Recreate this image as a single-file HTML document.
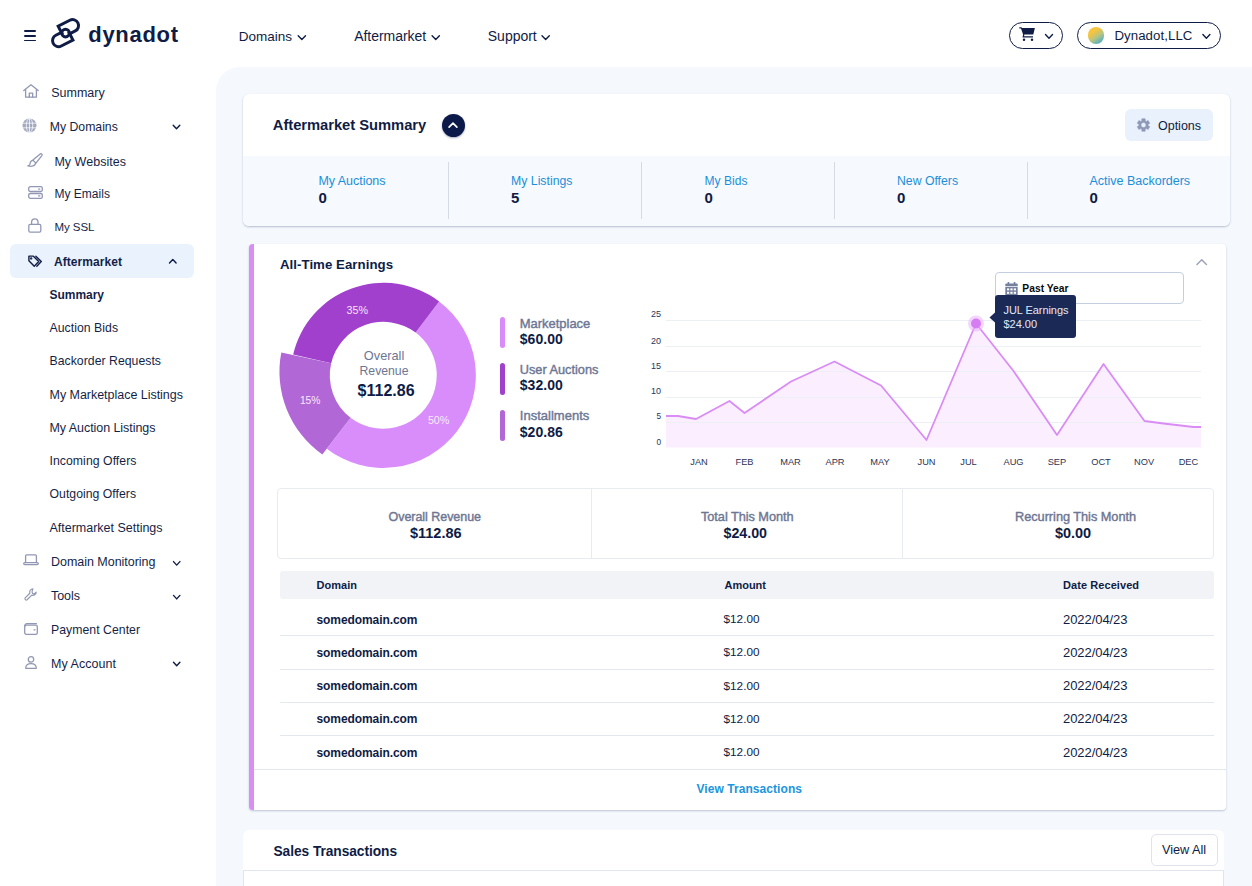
<!DOCTYPE html>
<html lang="en"><head><meta charset="utf-8"><title>Aftermarket Summary - Dynadot</title>
<style>
html,body{margin:0;padding:0;}
body{width:1252px;height:886px;position:relative;overflow:hidden;background:#fff;font-family:"Liberation Sans",Arial,sans-serif;}
.t{position:absolute;white-space:nowrap;line-height:1;}
.b{position:absolute;box-sizing:border-box;}
svg{overflow:visible;}
</style></head><body>
<header>
<div class="b" style="left:24px;top:30.4px;width:12px;height:1.6px;background:#0f1c45;border-radius:1px;"></div>
<div class="b" style="left:24px;top:35.1px;width:12px;height:1.6px;background:#0f1c45;border-radius:1px;"></div>
<div class="b" style="left:24px;top:39.800000000000004px;width:12px;height:1.6px;background:#0f1c45;border-radius:1px;"></div>
<svg class="b" style="left:0;top:0" width="1252" height="886"><g fill="none" stroke="#0f1c45" stroke-width="3" stroke-linejoin="miter"><path d="M62.52 34.73L58.16 26.18L69.84 20.23A6.0 6.0 0 0 1 75.28 30.93L69.05 34.10M68.58 31.48L72.94 40.03L61.26 45.98A6.0 6.0 0 0 1 55.82 35.28L62.05 32.11"/><circle cx="65.55" cy="33.1" r="3.8"/></g></svg>
<span class="t" style="left:88.3px;top:22px;font-size:22.0px;line-height:25px;color:#0f1c45;font-weight:700;letter-spacing:0.69px;">dynadot</span>
<span class="t" style="left:238.7px;top:29px;font-size:13.5px;line-height:15px;color:#0f1c45;letter-spacing:0.02px;">Domains</span>
<svg class="b" style="left:0;top:0" width="1252" height="886"><polyline points="298.2,35.8 301.84999999999997,39.4 305.5,35.8" fill="none" stroke="#0f1c45" stroke-width="1.4" stroke-linecap="round" stroke-linejoin="round"/></svg>
<span class="t" style="left:354.2px;top:28px;font-size:14.0px;line-height:16px;color:#0f1c45;letter-spacing:-0.03px;">Aftermarket</span>
<svg class="b" style="left:0;top:0" width="1252" height="886"><polyline points="432.1,35.8 435.75,39.4 439.40000000000003,35.8" fill="none" stroke="#0f1c45" stroke-width="1.4" stroke-linecap="round" stroke-linejoin="round"/></svg>
<span class="t" style="left:487.8px;top:28px;font-size:14.0px;line-height:16px;color:#0f1c45;letter-spacing:-0.02px;">Support</span>
<svg class="b" style="left:0;top:0" width="1252" height="886"><polyline points="542.0,35.8 545.65,39.4 549.3,35.8" fill="none" stroke="#0f1c45" stroke-width="1.4" stroke-linecap="round" stroke-linejoin="round"/></svg>
<div class="b" style="left:1009px;top:22px;width:54px;height:26.6px;border:1.2px solid #0f1c45;border-radius:14px;"></div>
<svg class="b" style="left:1019px;top:27px" width="17" height="15" viewBox="0 0 17 15"><path d="M0.3 0.2H2.4L3.1 0.9H15.9L14.3 7.6H5.3L5.1 9.2H14V10.6H3.5L4.1 7.4L2 1.6H0.3Z" fill="#0f1c45"/><circle cx="5" cy="12.8" r="1.25" fill="#0f1c45"/><circle cx="13" cy="12.8" r="1.25" fill="#0f1c45"/></svg>
<svg class="b" style="left:0;top:0" width="1252" height="886"><polyline points="1045.5,34.6 1049.0,38.2 1052.5,34.6" fill="none" stroke="#0f1c45" stroke-width="1.4" stroke-linecap="round" stroke-linejoin="round"/></svg>
<div class="b" style="left:1077px;top:22px;width:144px;height:26.6px;border:1.2px solid #0f1c45;border-radius:14px;"></div>
<div class="b" style="left:1087.6px;top:27px;width:16.8px;height:16.8px;border-radius:50%;background:linear-gradient(145deg,#f5c440 32%,#b3c584 58%,#4baec9 88%);"></div>
<span class="t" style="left:1114.4px;top:28px;font-size:13.25px;line-height:15px;color:#0f1c45;letter-spacing:0.07px;">Dynadot,LLC</span>
<svg class="b" style="left:0;top:0" width="1252" height="886"><polyline points="1202.9,34.6 1206.4,38.2 1209.9,34.6" fill="none" stroke="#0f1c45" stroke-width="1.4" stroke-linecap="round" stroke-linejoin="round"/></svg>
</header>
<aside><nav>
<span class="t" style="left:51.2px;top:86px;font-size:12.5px;line-height:14px;color:#141f47;">Summary</span>
<span class="t" style="left:49.8px;top:120px;font-size:12.25px;line-height:14px;color:#141f47;letter-spacing:-0.01px;">My Domains</span>
<svg class="b" style="left:0;top:0" width="1252" height="886"><polyline points="173.2,125.2 176.5,128.7 179.79999999999998,125.2" fill="none" stroke="#0f1c45" stroke-width="1.4" stroke-linecap="round" stroke-linejoin="round"/></svg>
<span class="t" style="left:54.4px;top:155px;font-size:12.5px;line-height:14px;color:#141f47;letter-spacing:0.03px;">My Websites</span>
<span class="t" style="left:54.4px;top:187px;font-size:12.0px;line-height:14px;color:#141f47;letter-spacing:0.03px;">My Emails</span>
<span class="t" style="left:54.4px;top:221px;font-size:11.5px;line-height:12px;color:#141f47;letter-spacing:-0.05px;">My SSL</span>
<div class="b" style="left:10px;top:244px;width:184px;height:34px;background:#e9f2fd;border-radius:6px;"></div>
<span class="t" style="left:54.0px;top:255px;font-size:12.0px;line-height:14px;color:#141f47;font-weight:700;letter-spacing:0.06px;">Aftermarket</span>
<svg class="b" style="left:0;top:0" width="1252" height="886"><polyline points="169.5,263.09999999999997 172.8,259.59999999999997 176.1,263.09999999999997" fill="none" stroke="#0f1c45" stroke-width="1.4" stroke-linecap="round" stroke-linejoin="round"/></svg>
<span class="t" style="left:49.5px;top:288px;font-size:12.0px;line-height:14px;color:#141f47;font-weight:700;letter-spacing:-0.03px;">Summary</span>
<span class="t" style="left:49.5px;top:321px;font-size:12.25px;line-height:14px;color:#141f47;letter-spacing:0.04px;">Auction Bids</span>
<span class="t" style="left:49.5px;top:354px;font-size:12.25px;line-height:14px;color:#141f47;letter-spacing:0.03px;">Backorder Requests</span>
<span class="t" style="left:49.5px;top:388px;font-size:12.5px;line-height:14px;color:#141f47;letter-spacing:-0.03px;">My Marketplace Listings</span>
<span class="t" style="left:49.5px;top:421px;font-size:12.5px;line-height:14px;color:#141f47;letter-spacing:-0.06px;">My Auction Listings</span>
<span class="t" style="left:49.5px;top:454px;font-size:12.25px;line-height:14px;color:#141f47;letter-spacing:0.05px;">Incoming Offers</span>
<span class="t" style="left:49.5px;top:487px;font-size:12.25px;line-height:14px;color:#141f47;letter-spacing:0.02px;">Outgoing Offers</span>
<span class="t" style="left:49.5px;top:521px;font-size:12.5px;line-height:14px;color:#141f47;letter-spacing:-0.01px;">Aftermarket Settings</span>
<span class="t" style="left:51.0px;top:555px;font-size:12.5px;line-height:14px;color:#141f47;letter-spacing:-0.03px;">Domain Monitoring</span>
<svg class="b" style="left:0;top:0" width="1252" height="886"><polyline points="173.5,561.6 176.7,565.1 179.9,561.6" fill="none" stroke="#0f1c45" stroke-width="1.4" stroke-linecap="round" stroke-linejoin="round"/></svg>
<span class="t" style="left:51.0px;top:589px;font-size:12.5px;line-height:14px;color:#141f47;letter-spacing:-0.05px;">Tools</span>
<svg class="b" style="left:0;top:0" width="1252" height="886"><polyline points="173.5,595.4 176.7,598.9 179.9,595.4" fill="none" stroke="#0f1c45" stroke-width="1.4" stroke-linecap="round" stroke-linejoin="round"/></svg>
<span class="t" style="left:51.0px;top:623px;font-size:12.25px;line-height:14px;color:#141f47;letter-spacing:0.04px;">Payment Center</span>
<span class="t" style="left:51.0px;top:657px;font-size:12.5px;line-height:14px;color:#141f47;letter-spacing:0.04px;">My Account</span>
<svg class="b" style="left:0;top:0" width="1252" height="886"><polyline points="173.5,662.1999999999999 176.7,665.6999999999999 179.9,662.1999999999999" fill="none" stroke="#0f1c45" stroke-width="1.4" stroke-linecap="round" stroke-linejoin="round"/></svg>
<svg class="b" style="left:23px;top:84px" width="16" height="14" viewBox="0 0 16 14" fill="none" stroke="#9298b3" stroke-width="1.3" stroke-linecap="round" stroke-linejoin="round"><path d="M0.8 6.6L8 0.8l7.2 5.8"/><path d="M2.6 5.6v7.6h10.8V5.6"/><path d="M6.3 13.2V9.2h3.4v4"/></svg>
<svg class="b" style="left:22px;top:118px" width="15" height="15" viewBox="0 0 15 15"><circle cx="7.5" cy="7.5" r="7" fill="#a3a9c0"/><g stroke="#fff" stroke-width="0.75" fill="none"><ellipse cx="7.5" cy="7.5" rx="3.2" ry="7"/><path d="M0.5 5.2h14M0.5 9.8h14M7.5 0.5v14"/></g></svg>
<svg class="b" style="left:27px;top:153px" width="16" height="14" viewBox="0 0 16 14" fill="none" stroke="#9298b3" stroke-width="1.3" stroke-linecap="round" stroke-linejoin="round"><path d="M5.9 7.1L13.2 0.9c1.1-0.8 2.5 0.6 1.7 1.7L8.9 10.1z"/><path d="M6.2 7.4c-2.6 0-3 2-3.2 3.6-0.1 0.9-1 1.6-2.2 1.9 3.6 0.9 7.8 0.2 7.8-3.1"/></svg>
<svg class="b" style="left:27.5px;top:186px" width="15" height="13" viewBox="0 0 15 13" fill="none" stroke="#9298b3" stroke-width="1.3" stroke-linecap="round" stroke-linejoin="round"><rect x="0.7" y="0.7" width="13.6" height="4.8" rx="1.6"/><rect x="0.7" y="7.5" width="13.6" height="4.8" rx="1.6"/><path d="M10.6 3.1h1.2M10.6 9.9h1.2"/></svg>
<svg class="b" style="left:28px;top:217.5px" width="14" height="15" viewBox="0 0 14 15" fill="none" stroke="#9298b3" stroke-width="1.3" stroke-linecap="round" stroke-linejoin="round"><rect x="0.8" y="6.4" width="12" height="7.8" rx="1.4"/><path d="M3.6 6.4V4a3.2 3.2 0 0 1 6.4 0v2.4"/></svg>
<svg class="b" style="left:27.8px;top:254.8px" width="14.4" height="12.4" viewBox="0 0 15 13" fill="none" stroke="#141f47" stroke-width="1.5" stroke-linecap="round" stroke-linejoin="round"><path d="M0.9 1.2h4.7l5.6 5.7-4.7 4.8L0.9 6z"/><path d="M8.2 1.2l5.7 5.7-4.7 4.8"/><circle cx="3.3" cy="3.6" r="0.5" fill="#141f47"/></svg>
<svg class="b" style="left:23px;top:554px" width="16" height="12" viewBox="0 0 16 12" fill="none" stroke="#9298b3" stroke-width="1.3" stroke-linecap="round" stroke-linejoin="round"><path d="M2.6 8.6V1.8c0-.6.4-1 1-1h8.8c.6 0 1 .4 1 1v6.8"/><rect x="0.7" y="8.6" width="14.6" height="2" rx="1"/></svg>
<svg class="b" style="left:24px;top:587.5px" width="13.4" height="12.6" viewBox="0 0 14 14" fill="none" stroke="#9298b3" stroke-width="1.3" stroke-linecap="round" stroke-linejoin="round"><path d="M9.4 0.9a3.6 3.6 0 0 0-3.3 4.9L0.9 11a1.5 1.5 0 0 0 2.1 2.1l5.2-5.2a3.6 3.6 0 0 0 4.9-3.3l-2.1 2-2-0.6-0.5-2z"/></svg>
<svg class="b" style="left:24px;top:623px" width="14" height="12" viewBox="0 0 14 12" fill="none" stroke="#9298b3" stroke-width="1.3" stroke-linecap="round" stroke-linejoin="round"><rect x="0.7" y="2.2" width="12.6" height="9.1" rx="1.6"/><path d="M0.7 3.6c0-1.6 0.8-2.9 2.4-2.9h9.3"/><path d="M10 6.8h1"/></svg>
<svg class="b" style="left:25px;top:656px" width="12" height="13" viewBox="0 0 12 13" fill="none" stroke="#9298b3" stroke-width="1.3" stroke-linecap="round" stroke-linejoin="round"><circle cx="6" cy="3.4" r="2.7"/><path d="M0.7 12.3c0-3.2 2-4.6 5.3-4.6s5.3 1.4 5.3 4.6z"/></svg>
</nav></aside>
<main>
<div class="b" style="left:216px;top:67px;width:1036px;height:819px;background:#f5f8fd;border-top-left-radius:24px;"></div>
<section>
<div class="b" style="left:243px;top:93.5px;width:987px;height:132.5px;background:#fff;border-radius:6px;box-shadow:0 1px 2px rgba(60,80,120,.35);"></div>
<div class="b" style="left:243px;top:156px;width:987px;height:70px;background:#f6f9fd;border-radius:0 0 6px 6px;"></div>
<span class="t" style="left:272.8px;top:117px;font-size:14.75px;line-height:16px;color:#0f1c45;font-weight:700;letter-spacing:-0.04px;">Aftermarket Summary</span>
<div class="b" style="left:441.5px;top:113.7px;width:23px;height:23px;background:#0c1a4a;border-radius:50%;box-shadow:0 1px 2px rgba(10,20,60,.35);"></div>
<svg class="b" style="left:0;top:0" width="1252" height="886"><polyline points="449.1,127.2 453.0,123.2 456.90000000000003,127.2" fill="none" stroke="#fff" stroke-width="1.7" stroke-linecap="round" stroke-linejoin="round"/></svg>
<div class="b" style="left:1125.4px;top:109.4px;width:87.6px;height:31.6px;background:#e8f1fc;border-radius:6px;"></div>
<span class="t" style="left:1158.0px;top:119px;font-size:12.5px;line-height:14px;color:#0f1c45;letter-spacing:-0.01px;">Options</span>
<svg class="b" style="left:1136.6px;top:118px" width="13" height="14" viewBox="0 0 13 14"><path d="M4.83 0.72 L8.17 0.72 L8.25 2.86 L9.21 3.41 L11.10 2.41 L12.78 5.31 L10.97 6.45 L10.97 7.55 L12.78 8.69 L11.10 11.59 L9.21 10.59 L8.25 11.14 L8.17 13.28 L4.83 13.28 L4.75 11.14 L3.79 10.59 L1.90 11.59 L0.22 8.69 L2.03 7.55 L2.03 6.45 L0.22 5.31 L1.90 2.41 L3.79 3.41 L4.75 2.86Z M6.5 4.5a2.5 2.5 0 1 0 0 5a2.5 2.5 0 1 0 0-5z" fill="#8f98b6" stroke="#8f98b6" stroke-width="0.5" stroke-linejoin="round" fill-rule="evenodd"/></svg>
<div class="b" style="left:448.0px;top:162px;width:1px;height:57px;background:#d5dae3;"></div>
<div class="b" style="left:641.0px;top:162px;width:1px;height:57px;background:#d5dae3;"></div>
<div class="b" style="left:834.0px;top:162px;width:1px;height:57px;background:#d5dae3;"></div>
<div class="b" style="left:1027.0px;top:162px;width:1px;height:57px;background:#d5dae3;"></div>
<span class="t" style="left:318.5px;top:174px;font-size:12.5px;line-height:14px;color:#1b8fd9;letter-spacing:-0.04px;">My Auctions</span>
<span class="t" style="left:318.5px;top:189px;font-size:15.0px;line-height:17px;color:#0f1c45;font-weight:700;letter-spacing:0.06px;">0</span>
<span class="t" style="left:511.0px;top:174px;font-size:12.25px;line-height:14px;color:#1b8fd9;letter-spacing:0.02px;">My Listings</span>
<span class="t" style="left:511.0px;top:189px;font-size:15.0px;line-height:17px;color:#0f1c45;font-weight:700;letter-spacing:0.06px;">5</span>
<span class="t" style="left:704.5px;top:174px;font-size:12.0px;line-height:14px;color:#1b8fd9;letter-spacing:0.05px;">My Bids</span>
<span class="t" style="left:704.5px;top:189px;font-size:15.0px;line-height:17px;color:#0f1c45;font-weight:700;letter-spacing:0.06px;">0</span>
<span class="t" style="left:897.0px;top:174px;font-size:12.25px;line-height:14px;color:#1b8fd9;">New Offers</span>
<span class="t" style="left:897.0px;top:189px;font-size:15.0px;line-height:17px;color:#0f1c45;font-weight:700;letter-spacing:0.06px;">0</span>
<span class="t" style="left:1089.5px;top:174px;font-size:12.5px;line-height:14px;color:#1b8fd9;letter-spacing:-0.01px;">Active Backorders</span>
<span class="t" style="left:1089.5px;top:189px;font-size:15.0px;line-height:17px;color:#0f1c45;font-weight:700;letter-spacing:0.06px;">0</span>
</section>
<section>
<div class="b" style="left:249px;top:244px;width:977px;height:566px;background:#fff;border-radius:4px;box-shadow:0 1px 2px rgba(60,80,120,.3);border-left:5px solid #da8ef3;"></div>
<span class="t" style="left:280.0px;top:257px;font-size:13.25px;line-height:15px;color:#0f1c45;font-weight:700;letter-spacing:0.04px;">All-Time Earnings</span>
<svg class="b" style="left:0;top:0" width="1252" height="886"><polyline points="1197.0,264.5 1201.75,259.7 1206.5,264.5" fill="none" stroke="#9aa0b5" stroke-width="1.4" stroke-linecap="round" stroke-linejoin="round"/></svg>
<svg class="b" style="left:0;top:0" width="1252" height="886"><path d="M439.13 301.45A92.6 92.6 0 1 1 326.77 448.67L350.62 417.81A53.6 53.6 0 1 0 415.66 332.59Z" fill="#d98dfa"/><path d="M293.17 354.57A92.6 92.6 0 0 1 439.13 301.45L415.66 332.59A53.6 53.6 0 0 0 331.17 363.34Z" fill="#a140cc"/><path d="M281.3 352.4A101.4 101.4 0 0 0 322.3 454.5L350.62 417.81A53.6 53.6 0 0 1 331.17 363.34Z" fill="#b267d6"/></svg>
<span class="t" style="left:346.4px;top:304px;font-size:10.75px;line-height:12px;color:#f6e4fc;letter-spacing:0.09px;">35%</span>
<span class="t" style="left:299.9px;top:395px;font-size:10.25px;line-height:11px;color:#f6e9fb;letter-spacing:-0.01px;">15%</span>
<span class="t" style="left:427.9px;top:414px;font-size:10.75px;line-height:12px;color:#f6e9fb;letter-spacing:-0.01px;">50%</span>
<span class="t" style="left:363.8px;top:348px;font-size:12.75px;line-height:15px;color:#6d7693;letter-spacing:0.02px;">Overall</span>
<span class="t" style="left:359.5px;top:364px;font-size:12.25px;line-height:14px;color:#6d7693;letter-spacing:-0.01px;">Revenue</span>
<span class="t" style="left:357.6px;top:382px;font-size:16.0px;line-height:17px;color:#0f1c45;font-weight:700;letter-spacing:0.01px;">$112.86</span>
<div class="b" style="left:500px;top:316.8px;width:5px;height:31.6px;background:#d98cf9;border-radius:2.5px;"></div>
<span class="t" style="left:519.8px;top:316px;font-size:13.0px;line-height:15px;color:#6d7693;-webkit-text-stroke:0.4px #6d7693;letter-spacing:-0.03px;">Marketplace</span>
<span class="t" style="left:519.8px;top:331px;font-size:14.0px;line-height:16px;color:#0f1c45;font-weight:700;letter-spacing:0.04px;">$60.00</span>
<div class="b" style="left:500px;top:363.2px;width:5px;height:31.6px;background:#a041cc;border-radius:2.5px;"></div>
<span class="t" style="left:519.8px;top:362px;font-size:12.75px;line-height:15px;color:#6d7693;-webkit-text-stroke:0.4px #6d7693;letter-spacing:-0.01px;">User Auctions</span>
<span class="t" style="left:519.8px;top:377px;font-size:14.0px;line-height:16px;color:#0f1c45;font-weight:700;letter-spacing:0.04px;">$32.00</span>
<div class="b" style="left:500px;top:409.7px;width:5px;height:31.6px;background:#b267d6;border-radius:2.5px;"></div>
<span class="t" style="left:519.8px;top:408px;font-size:13.0px;line-height:15px;color:#6d7693;-webkit-text-stroke:0.4px #6d7693;letter-spacing:0.01px;">Installments</span>
<span class="t" style="left:519.8px;top:424px;font-size:14.0px;line-height:16px;color:#0f1c45;font-weight:700;letter-spacing:0.04px;">$20.86</span>
<svg class="b" style="left:0;top:0" width="1252" height="886"><polygon points="666,416 678,416 696,419 729.5,401 744.5,413 791,381.5 834.5,361.5 881,385.5 926.5,440 976,323.5 1013.5,371 1057,435 1103.5,364 1144.5,421 1163.5,423.5 1193.5,427 1201,427 1201,447.5 666,447.5" fill="#fbeefe"/><path d="M666 320.5H1201" stroke="#ecf0f5" stroke-width="1"/><path d="M666 346.5H1201" stroke="#ecf0f5" stroke-width="1"/><path d="M666 371.5H1201" stroke="#ecf0f5" stroke-width="1"/><path d="M666 397.5H1201" stroke="#ecf0f5" stroke-width="1"/><path d="M666 422.5H1201" stroke="#ecf0f5" stroke-width="1"/><polyline points="666,416 678,416 696,419 729.5,401 744.5,413 791,381.5 834.5,361.5 881,385.5 926.5,440 976,323.5 1013.5,371 1057,435 1103.5,364 1144.5,421 1163.5,423.5 1193.5,427 1201,427" fill="none" stroke="#da8cf5" stroke-width="1.8" stroke-linejoin="round"/><circle cx="976" cy="323.5" r="8" fill="#e9b3fb" fill-opacity="0.55"/><circle cx="976" cy="323.5" r="5" fill="#d77df3"/></svg>
<span class="t" style="left:651.0px;top:309px;font-size:9.0px;line-height:10px;color:#2a3358;letter-spacing:-0.01px;">25</span>
<span class="t" style="left:651.0px;top:336px;font-size:9.0px;line-height:10px;color:#2a3358;letter-spacing:-0.01px;">20</span>
<span class="t" style="left:651.0px;top:361px;font-size:9.0px;line-height:10px;color:#2a3358;letter-spacing:-0.01px;">15</span>
<span class="t" style="left:651.0px;top:386px;font-size:9.0px;line-height:10px;color:#2a3358;letter-spacing:-0.01px;">10</span>
<span class="t" style="left:656.4px;top:412px;font-size:8.25px;line-height:9px;color:#2a3358;letter-spacing:0.01px;">5</span>
<span class="t" style="left:656.4px;top:438px;font-size:8.25px;line-height:9px;color:#2a3358;letter-spacing:0.01px;">0</span>
<span class="t" style="left:690.3px;top:457px;font-size:9.25px;line-height:10px;color:#2a3358;">JAN</span>
<span class="t" style="left:735.5px;top:457px;font-size:9.25px;line-height:10px;color:#2a3358;">FEB</span>
<span class="t" style="left:780.2px;top:457px;font-size:9.25px;line-height:10px;color:#2a3358;">MAR</span>
<span class="t" style="left:825.5px;top:457px;font-size:9.25px;line-height:10px;color:#2a3358;">APR</span>
<span class="t" style="left:870.3px;top:457px;font-size:9.25px;line-height:10px;color:#2a3358;">MAY</span>
<span class="t" style="left:917.5px;top:457px;font-size:9.25px;line-height:10px;color:#2a3358;">JUN</span>
<span class="t" style="left:960.3px;top:457px;font-size:9.25px;line-height:10px;color:#2a3358;">JUL</span>
<span class="t" style="left:1003.5px;top:457px;font-size:9.25px;line-height:10px;color:#2a3358;">AUG</span>
<span class="t" style="left:1047.7px;top:457px;font-size:9.25px;line-height:10px;color:#2a3358;">SEP</span>
<span class="t" style="left:1091.2px;top:457px;font-size:9.25px;line-height:10px;color:#2a3358;">OCT</span>
<span class="t" style="left:1134.0px;top:457px;font-size:9.25px;line-height:10px;color:#2a3358;">NOV</span>
<span class="t" style="left:1178.7px;top:457px;font-size:9.25px;line-height:10px;color:#2a3358;">DEC</span>
<div class="b" style="left:995px;top:272px;width:189px;height:32px;background:#fff;border:1px solid #c3cfdf;border-radius:4px;"></div>
<svg class="b" style="left:1005px;top:281.5px" width="13" height="14" viewBox="0 0 13 14"><path d="M0.3 2.6c0-.7.5-1.2 1.2-1.2h10c.7 0 1.2.5 1.2 1.2v1.6H.3z" fill="#75809f"/><rect x="2.6" y="0" width="1.7" height="3" rx=".5" fill="#75809f"/><rect x="8.7" y="0" width="1.7" height="3" rx=".5" fill="#75809f"/><path d="M.3 5h12.4v7.6c0 .7-.5 1.2-1.2 1.2h-10c-.7 0-1.2-.5-1.2-1.2z" fill="#75809f"/><g fill="#fff"><rect x="2" y="6.4" width="2.2" height="2"/><rect x="5.4" y="6.4" width="2.2" height="2"/><rect x="8.8" y="6.4" width="2.2" height="2"/><rect x="2" y="9.8" width="2.2" height="2"/><rect x="5.4" y="9.8" width="2.2" height="2"/><rect x="8.8" y="9.8" width="2.2" height="2"/></g></svg>
<span class="t" style="left:1022.3px;top:283px;font-size:10.25px;line-height:11px;color:#0a0a0a;font-weight:700;letter-spacing:0.04px;">Past Year</span>
<div class="b" style="left:994.5px;top:295px;width:81.5px;height:42.5px;background:#1a2956;border-radius:3px;"></div>
<svg class="b" style="left:0;top:0" width="1252" height="886"><path d="M995 312.5L989.5 317.5L995 322.5Z" fill="#1a2956"/></svg>
<span class="t" style="left:1003.5px;top:304px;font-size:11.0px;line-height:12px;color:#e3e8f6;letter-spacing:-0.06px;">JUL Earnings</span>
<span class="t" style="left:1003.5px;top:318px;font-size:11.0px;line-height:12px;color:#e3e8f6;letter-spacing:-0.03px;">$24.00</span>
<div class="b" style="left:277px;top:488px;width:937px;height:70.5px;background:#fff;border:1px solid #e8ebf0;border-radius:4px;"></div>
<div class="b" style="left:591px;top:488px;width:1px;height:70.5px;background:#e8ebf0;"></div>
<div class="b" style="left:902px;top:488px;width:1px;height:70.5px;background:#e8ebf0;"></div>
<span class="t" style="left:388.5px;top:510px;font-size:12.5px;line-height:14px;color:#6d7693;-webkit-text-stroke:0.4px #6d7693;letter-spacing:-0.04px;">Overall Revenue</span>
<span class="t" style="left:410.0px;top:525px;font-size:14.5px;line-height:16px;color:#0f1c45;font-weight:700;letter-spacing:-0.02px;">$112.86</span>
<span class="t" style="left:701.0px;top:509px;font-size:12.75px;line-height:15px;color:#6d7693;-webkit-text-stroke:0.4px #6d7693;letter-spacing:-0.05px;">Total This Month</span>
<span class="t" style="left:723.5px;top:525px;font-size:14.25px;line-height:16px;color:#0f1c45;font-weight:700;letter-spacing:-0.02px;">$24.00</span>
<span class="t" style="left:1015.0px;top:509px;font-size:12.75px;line-height:15px;color:#6d7693;-webkit-text-stroke:0.4px #6d7693;letter-spacing:-0.03px;">Recurring This Month</span>
<span class="t" style="left:1055.0px;top:525px;font-size:14.5px;line-height:16px;color:#0f1c45;font-weight:700;letter-spacing:-0.07px;">$0.00</span>
<div class="b" style="left:279.5px;top:571px;width:934px;height:27.5px;background:#f1f3f7;border-radius:3px;"></div>
<span class="t" style="left:316.5px;top:579px;font-size:11.0px;line-height:12px;color:#0f1c45;font-weight:700;letter-spacing:0.03px;">Domain</span>
<span class="t" style="left:724.5px;top:579px;font-size:11.0px;line-height:12px;color:#0f1c45;font-weight:700;letter-spacing:-0.01px;">Amount</span>
<span class="t" style="left:1063.0px;top:579px;font-size:11.0px;line-height:12px;color:#0f1c45;font-weight:700;letter-spacing:0.07px;">Date Received</span>
<span class="t" style="left:316.5px;top:613px;font-size:12.0px;line-height:14px;color:#0f1c45;font-weight:700;letter-spacing:-0.08px;">somedomain.com</span>
<span class="t" style="left:723.5px;top:612px;font-size:11.75px;line-height:13px;color:#0f1c45;letter-spacing:0.01px;">$12.00</span>
<span class="t" style="left:1063.0px;top:612px;font-size:13.0px;line-height:15px;color:#0f1c45;letter-spacing:-0.06px;">2022/04/23</span>
<span class="t" style="left:316.5px;top:646px;font-size:12.0px;line-height:14px;color:#0f1c45;font-weight:700;letter-spacing:-0.08px;">somedomain.com</span>
<span class="t" style="left:723.5px;top:645px;font-size:11.75px;line-height:13px;color:#0f1c45;letter-spacing:0.01px;">$12.00</span>
<span class="t" style="left:1063.0px;top:645px;font-size:13.0px;line-height:15px;color:#0f1c45;letter-spacing:-0.06px;">2022/04/23</span>
<span class="t" style="left:316.5px;top:679px;font-size:12.0px;line-height:14px;color:#0f1c45;font-weight:700;letter-spacing:-0.08px;">somedomain.com</span>
<span class="t" style="left:723.5px;top:679px;font-size:11.75px;line-height:13px;color:#0f1c45;letter-spacing:0.01px;">$12.00</span>
<span class="t" style="left:1063.0px;top:678px;font-size:13.0px;line-height:15px;color:#0f1c45;letter-spacing:-0.06px;">2022/04/23</span>
<span class="t" style="left:316.5px;top:712px;font-size:12.0px;line-height:14px;color:#0f1c45;font-weight:700;letter-spacing:-0.08px;">somedomain.com</span>
<span class="t" style="left:723.5px;top:712px;font-size:11.75px;line-height:13px;color:#0f1c45;letter-spacing:0.01px;">$12.00</span>
<span class="t" style="left:1063.0px;top:711px;font-size:13.0px;line-height:15px;color:#0f1c45;letter-spacing:-0.06px;">2022/04/23</span>
<span class="t" style="left:316.5px;top:746px;font-size:12.0px;line-height:14px;color:#0f1c45;font-weight:700;letter-spacing:-0.08px;">somedomain.com</span>
<span class="t" style="left:723.5px;top:745px;font-size:11.75px;line-height:13px;color:#0f1c45;letter-spacing:0.01px;">$12.00</span>
<span class="t" style="left:1063.0px;top:745px;font-size:13.0px;line-height:15px;color:#0f1c45;letter-spacing:-0.06px;">2022/04/23</span>
<div class="b" style="left:279.5px;top:635.0px;width:934px;height:1px;background:#e3e8ef;"></div>
<div class="b" style="left:279.5px;top:668.5px;width:934px;height:1px;background:#e3e8ef;"></div>
<div class="b" style="left:279.5px;top:702.0px;width:934px;height:1px;background:#e3e8ef;"></div>
<div class="b" style="left:279.5px;top:735.0px;width:934px;height:1px;background:#e3e8ef;"></div>
<div class="b" style="left:254px;top:768.5px;width:972px;height:1px;background:#e3e8ef;"></div>
<span class="t" style="left:696.5px;top:782px;font-size:12.0px;line-height:14px;color:#1b95dc;font-weight:700;letter-spacing:0.06px;">View Transactions</span>
</section>
<section>
<div class="b" style="left:243px;top:830px;width:980.5px;height:60px;background:#fff;border-radius:6px 6px 0 0;"></div>
<div class="b" style="left:243px;top:870px;width:980.5px;height:20px;border:1px solid #e1e6ee;border-bottom:none;background:#fff;"></div>
<span class="t" style="left:273.5px;top:844px;font-size:13.75px;line-height:15px;color:#0f1c45;font-weight:700;letter-spacing:-0.06px;">Sales Transactions</span>
<div class="b" style="left:1151px;top:834px;width:67px;height:32px;background:#fff;border:1px solid #dfe4ec;border-radius:5px;"></div>
<span class="t" style="left:1162.0px;top:842px;font-size:12.75px;line-height:15px;color:#0f1c45;letter-spacing:-0.06px;">View All</span>
</section>
</main>
</body></html>
